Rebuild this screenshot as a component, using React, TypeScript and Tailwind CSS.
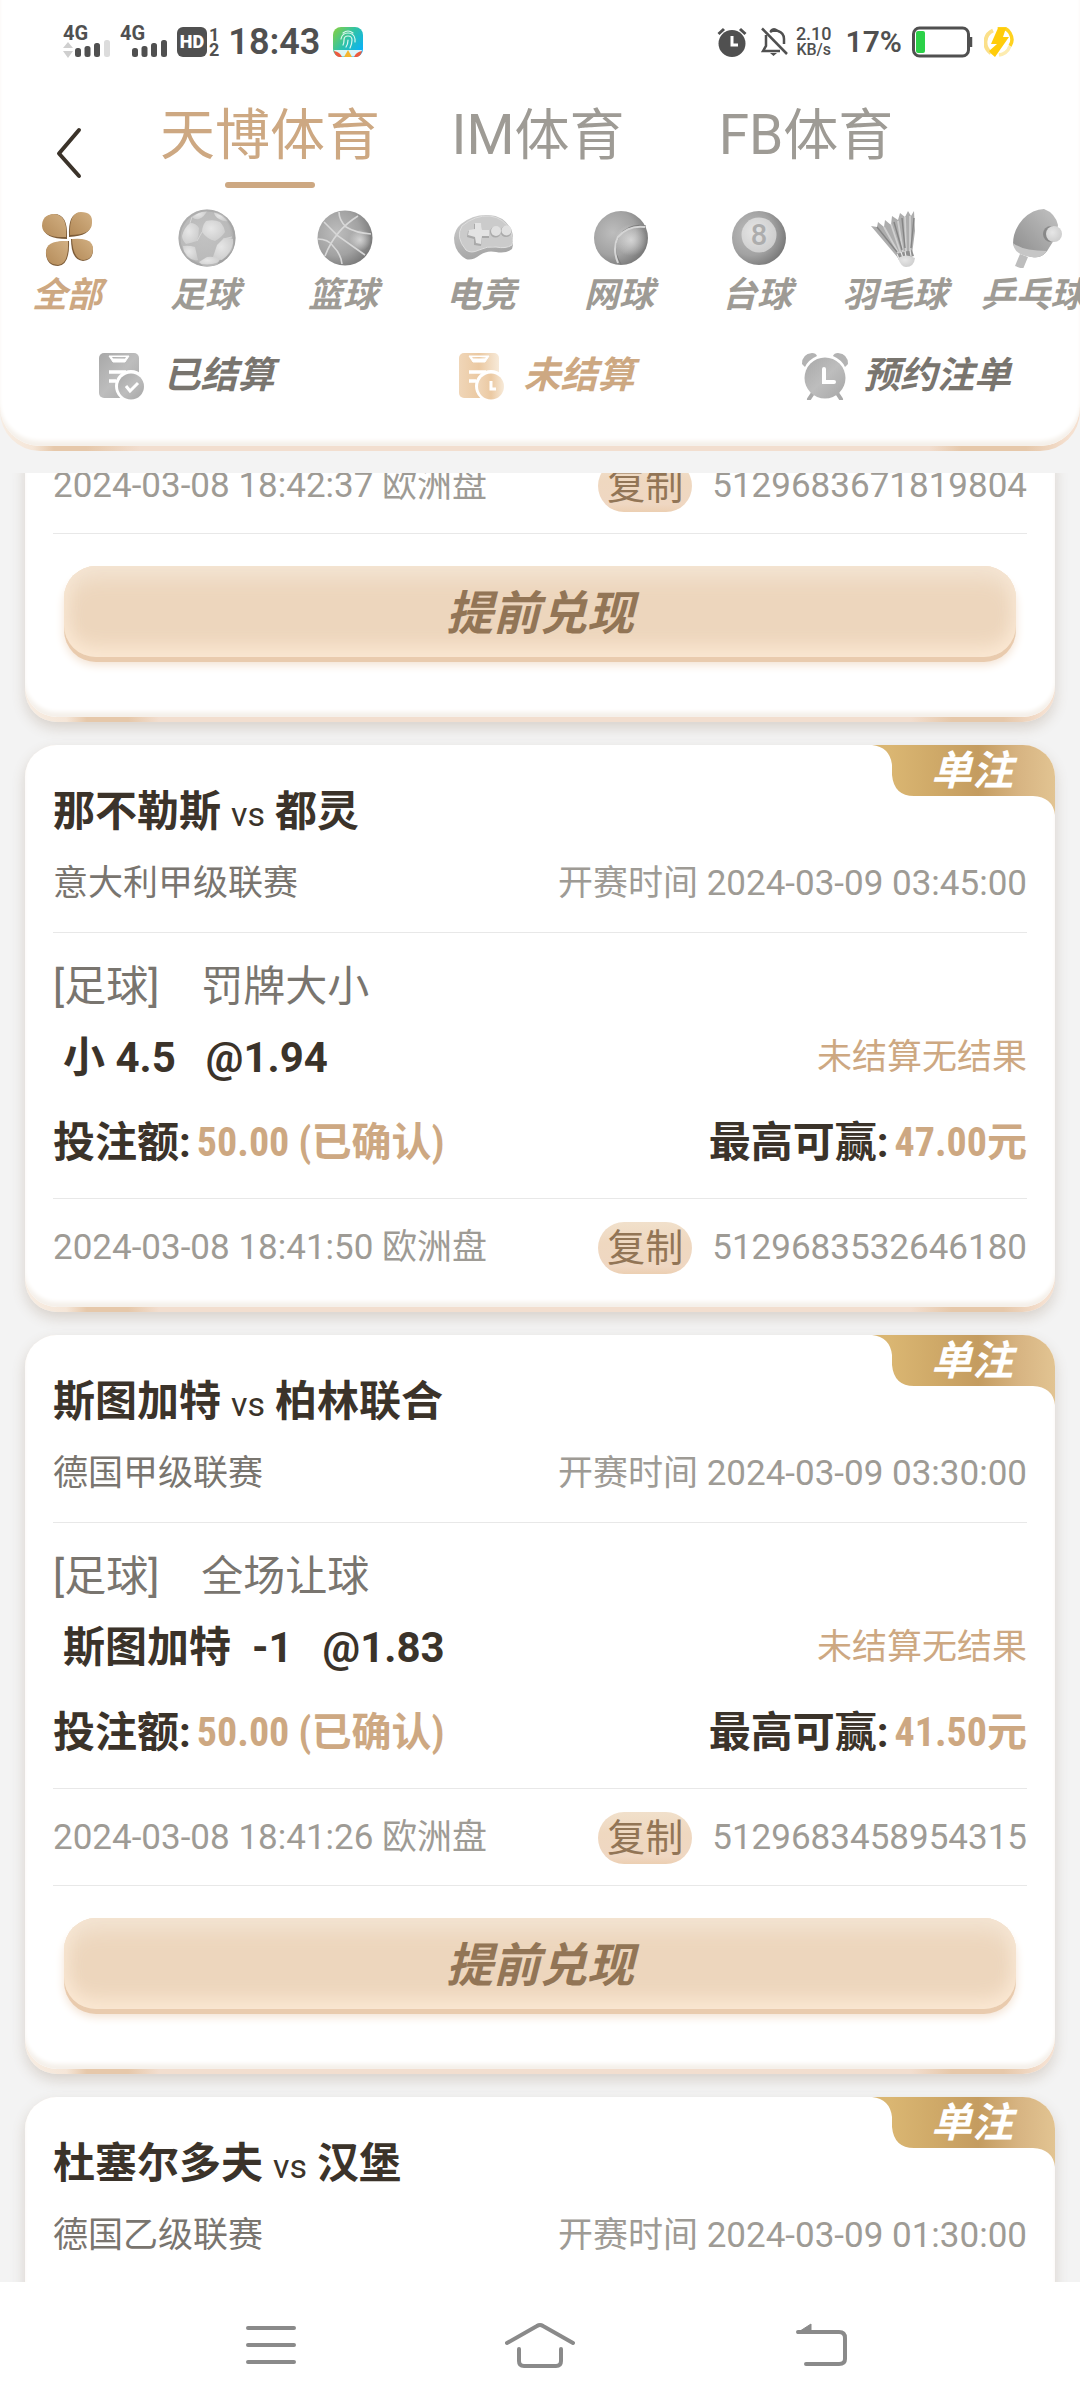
import React from "react";

type Bet = {
  id: string;
  home: string;
  away: string;
  league: string;
  start: string;
  market: string;
  pick: string;
  odds: string;
  win: string;
  placed: string;
  order: string;
  cashOut: boolean;
};

const bets: Bet[] = [
  {
    id: "b1",
    home: "那不勒斯",
    away: "都灵",
    league: "意大利甲级联赛",
    start: "2024-03-09 03:45:00",
    market: "罚牌大小",
    pick: "小 4.5",
    odds: "@1.94",
    win: "47.00",
    placed: "2024-03-08 18:41:50",
    order: "5129683532646180",
    cashOut: false,
  },
  {
    id: "b2",
    home: "斯图加特",
    away: "柏林联合",
    league: "德国甲级联赛",
    start: "2024-03-09 03:30:00",
    market: "全场让球",
    pick: "斯图加特  -1",
    odds: "@1.83",
    win: "41.50",
    placed: "2024-03-08 18:41:26",
    order: "5129683458954315",
    cashOut: true,
  },
];

/* Shared gradients used by the icons below */
function Gradients() {
  return (
    <svg className="absolute h-0 w-0" aria-hidden="true">
      <defs>
        <linearGradient id="petal" x1="1" y1="0" x2="0" y2="1">
          <stop offset="0" stopColor="#d2b083" />
          <stop offset="1" stopColor="#b48b59" />
        </linearGradient>
        <radialGradient id="lightBall" cx="0.45" cy="0.45" r="0.6">
          <stop offset="0" stopColor="#c2c2c2" />
          <stop offset="0.75" stopColor="#bababa" />
          <stop offset="1" stopColor="#9a9a9a" />
        </radialGradient>
        <radialGradient id="patch" cx="0.4" cy="0.4" r="0.7">
          <stop offset="0" stopColor="#e6e6e6" />
          <stop offset="1" stopColor="#cbcbcb" />
        </radialGradient>
        <radialGradient id="darkBall" cx="0.35" cy="0.4" r="0.7">
          <stop offset="0" stopColor="#bdbdbd" />
          <stop offset="0.6" stopColor="#a2a2a2" />
          <stop offset="1" stopColor="#757575" />
        </radialGradient>
        <radialGradient id="shine" cx="0.5" cy="0.5" r="0.5">
          <stop offset="0" stopColor="#e0e0e0" stopOpacity="0.8" />
          <stop offset="1" stopColor="#e0e0e0" stopOpacity="0" />
        </radialGradient>
        <linearGradient id="pad" x1="0" y1="0" x2="0.3" y2="1">
          <stop offset="0" stopColor="#cfcfcf" />
          <stop offset="1" stopColor="#a6a6a6" />
        </linearGradient>
        <linearGradient id="paddle" x1="1" y1="0" x2="0" y2="1">
          <stop offset="0" stopColor="#c2c2c2" />
          <stop offset="1" stopColor="#8c8c8c" />
        </linearGradient>
        <linearGradient id="grayFill" x1="0" y1="0" x2="1" y2="1">
          <stop offset="0" stopColor="#a8a8a8" />
          <stop offset="0.5" stopColor="#bdbdbd" />
          <stop offset="1" stopColor="#a6a6a6" />
        </linearGradient>
        <linearGradient id="goldFill" x1="0" y1="0" x2="1" y2="0">
          <stop offset="0" stopColor="#f0d6b8" />
          <stop offset="0.5" stopColor="#ebc9a2" />
          <stop offset="1" stopColor="#f7ead9" />
        </linearGradient>
        <linearGradient id="ribbon" x1="0" y1="0" x2="1" y2="0">
          <stop offset="0.1" stopColor="#dab672" />
          <stop offset="0.35" stopColor="#cfa968" />
          <stop offset="0.58" stopColor="#c49c60" />
          <stop offset="0.8" stopColor="#d7b482" />
          <stop offset="1" stopColor="#e2c492" />
        </linearGradient>
        <linearGradient id="appTile" x1="0" y1="0" x2="1" y2="0.8">
          <stop offset="0" stopColor="#8bd13c" />
          <stop offset="0.5" stopColor="#2ec2a8" />
          <stop offset="1" stopColor="#06b0ff" />
        </linearGradient>
      </defs>
    </svg>
  );
}

function Signal({ weak }: { weak?: boolean }) {
  return (
    <div className="relative w-[48px]">
      <svg width="48" height="34" viewBox="0 0 48 34" aria-hidden="true">
        {weak && <path d="M0 23 5 17l5 6zM0 26h10l-5 7z" fill="#cfcfcf" />}
        <g fill="#505050">
          <rect x="12" y="23" width="6" height="9" rx="2.5" />
          <rect x="21.5" y="21" width="6" height="11" rx="2.5" />
          <rect x="31" y="18" width="6" height="14" rx="2.5" />
        </g>
        <rect x="41" y="15" width="6" height="17" rx="2.5" fill={weak ? "#dcdcdc" : "#505050"} />
      </svg>
      <span className="absolute -top-1 left-0 text-[20px] leading-[24px] font-bold">4G</span>
    </div>
  );
}

function StatusBar() {
  return (
    <div className="flex h-[84px] items-center pr-[66px] pl-[63px] font-medium text-[#505050]">
      <div className="flex items-center gap-[9px]">
        <Signal weak />
        <Signal />
        <div className="flex items-center gap-0.5">
          <span className="flex h-[30px] w-[30px] items-center justify-center rounded-md bg-[#505050] text-[18px] leading-[30px] font-black text-white">
            HD
          </span>
          <span className="flex flex-col text-[18px] leading-[15px] font-bold">
            <span>1</span>
            <span>2</span>
          </span>
        </div>
        <span className="text-[36px] leading-[40px] font-semibold">18:43</span>
        <svg className="ml-1" width="30" height="30" viewBox="0 0 30 30" aria-hidden="true">
          <rect width="30" height="30" rx="8" fill="url(#appTile)" />
          <g fill="none" stroke="#d9f7ee" strokeWidth="1.2" strokeLinecap="round">
            <path d="M10 6q5-4 10 0M8 12q1-6 7-6t7 6v3M10 18q1-2 1-5 0-4 4-4t4 4q0 4-2 8M15 13q0 4-2 7" />
          </g>
          <path d="M1 23h28q-1 4-4 6.500H5Q2 27 1 23z" fill="#fff" fillOpacity="0.85" />
          <path d="M1 24q6 1 8 6H6q-4-1-5-6zM29 24q-6 1-8 6h3q4-1 5-6z" fill="#ee5a3f" />
          <path d="M15 23l4 7h-8z" fill="#f5b52e" />
        </svg>
      </div>
      <div className="ml-auto flex items-center">
        <svg width="30" height="30" viewBox="0 0 30 30" aria-hidden="true">
          <circle cx="15" cy="16.5" r="13.5" fill="#505050" />
          <path d="M1.5 7 7 2M28.5 7 23 2" stroke="#505050" strokeWidth="3" />
          <path d="M15 9v9h6" stroke="#fff" strokeWidth="3" fill="none" />
        </svg>
        <svg className="ml-3.5" width="28" height="30" viewBox="0 0 28 30" aria-hidden="true">
          <g fill="none" stroke="#505050" strokeWidth="2.5">
            <path d="M5 8v11l-3 5h17M9 5q4-3 8-1 6 2 6 8v5" />
            <path d="M1 1.5 26 27" />
          </g>
          <path d="M9 3q4-4 8 0v2H9zM9 26h7l-3.5 3z" fill="#505050" />
        </svg>
        <div className="ml-[7px] flex flex-col items-center text-[18px] leading-[16px]">
          <span>2.10</span>
          <span className="text-base leading-[16px]">KB/s</span>
        </div>
        <span className="ml-3.5 text-[30px] leading-[36px] font-semibold">17%</span>
        <svg className="ml-2.5" width="62" height="32" viewBox="0 0 62 32" aria-hidden="true">
          <rect x="1.5" y="2" width="55" height="28" rx="6" fill="none" stroke="#505050" strokeWidth="3" />
          <rect x="4" y="5" width="9" height="22" rx="2" fill="#2bd148" />
          <path d="M59 11v10" stroke="#505050" strokeWidth="2.5" />
        </svg>
        <svg className="ml-2.5" width="30" height="30" viewBox="0 0 30 30" aria-hidden="true">
          <path d="M7 26A13 13 0 0 1 9 3.5" fill="none" stroke="#fbe08a" strokeWidth="4" />
          <path d="M14 2q8-3 12 4 4 7 0 13" fill="none" stroke="#ffd21f" strokeWidth="3.5" />
          <path d="M26 19q-3 8-11 9" fill="none" stroke="#fdecb0" strokeWidth="3.5" />
          <path d="M14 1h8l-3 9h6L11 30q-4-3-6-6l8-7H7z" fill="#ffcc0a" />
        </svg>
      </div>
    </div>
  );
}

const tabs = ["天博体育", "IM体育", "FB体育"];

function Tabs() {
  return (
    <nav className="flex items-start">
      <button type="button" aria-label="返回" className="flex w-[136px] shrink-0 pt-[43px] pl-[54px]">
        <svg width="28" height="52" viewBox="0 0 28 52">
          <path d="M25 3 5 26.5 25 49" fill="none" stroke="#3b332a" strokeWidth="4" strokeLinecap="round" strokeLinejoin="round" />
        </svg>
      </button>
      {tabs.map((tab, i) => (
        <button
          key={tab}
          type="button"
          className={
            i === 0
              ? "flex w-[268px] flex-col items-center gap-[15px] pt-[19px] text-[55px] leading-[64px] text-[#cda882]"
              : "flex w-[268px] flex-col items-center gap-[15px] pt-[19px] text-[55px] leading-[64px] text-[#9e9b95]"
          }
        >
          {tab}
          {i === 0 && <span className="h-1.5 w-[90px] rounded-full bg-[#cda882]" />}
        </button>
      ))}
    </nav>
  );
}

const sports: { name: string; icon: React.ReactNode }[] = [
  {
    name: "全部",
    icon: (
      <>
        <g fill="#7d5c38">
          <path d="M28 29Q29 6 15 6 4 7 4 19q1 12 24 12z" />
          <path d="M30 28Q29 5 41 5t11 11q0 12-22 13z" />
          <path d="M30 33Q6 33 7 46q1 12 12 12 12-1 11-25z" />
          <path d="M32 31q0 21 12 22 10-1 10-11 0-12-22-11z" />
        </g>
        <g fill="url(#petal)">
          <path d="M27 29Q29 6 14 6 3 7 3 18q1 12 24 11z" />
          <path d="M31 27Q30 4 42 4t11 11q0 12-22 12z" />
          <path d="M29 33Q6 32 7 45q1 12 12 12 11-1 10-24z" />
          <path d="M33 31q1 21 12 21 9-1 9-11 0-12-21-10z" />
        </g>
      </>
    ),
  },
  {
    name: "足球",
    icon: (
      <>
        <circle cx="30" cy="30" r="28.5" fill="url(#lightBall)" />
        <g fill="url(#patch)">
          <path d="M13 15q6 0 9 5 0 7-2 13-6 2-11 3-4-4-4-8 2-8 8-13z" />
          <path d="M29 13q8-2 14 1 4 4 5 10-4 6-10 9-8-2-13-9 0-6 4-11z" />
          <path d="M6 38q6-1 12 1l3 13q-6 1-11-3-4-5-4-11z" />
          <path d="M40 37l6-6q5-2 10 0 1 6-1 11-4 6-10 10-6 0-9-3z" />
          <path d="M22 54l8-5q7-1 13 2l-3 6q-8 2-14 1z" />
          <path d="M15 9q8-6 15-6-2 5-8 8-4 1-7-2z" />
          <path d="M37 4q10 2 14 9-4 1-9-2-5-3-5-7z" />
        </g>
        <path d="M55 29l-9 2M20 33l5-9M13 15l2-6" stroke="#d6d6d6" strokeWidth="1" />
        <circle cx="30" cy="30" r="27.5" fill="none" stroke="#a0a0a0" strokeOpacity="0.5" strokeWidth="2" />
      </>
    ),
  },
  {
    name: "篮球",
    icon: (
      <>
        <circle cx="30" cy="30" r="27.5" fill="url(#darkBall)" />
        <circle cx="45" cy="32" r="11" fill="url(#shine)" />
        <g fill="none" stroke="#d8d8d8" strokeWidth="1.6">
          <path d="M24 4q0 8 7 15 10 6 25 7" />
          <path d="M43 8Q20 22 10 48" />
          <path d="M9 14l14 14 27 19" />
          <path d="M3 31q10 0 15 7 8 8 9 18" />
        </g>
      </>
    ),
  },
  {
    name: "电竞",
    icon: (
      <>
        <path d="M8 16Q20 6 36 7q15 1 22 14 4 10 1 20-6 5-16 3-9-2-16 3-8 6-14 4Q1 44 1 30q1-9 7-14z" fill="url(#pad)" />
        <path d="M9 18Q22 7 37 8q14 2 20 14 4 9 2 15-6 4-16 2-9-1-17 3-8 4-13 0Q2 29 9 18z" fill="#cbcbcb" stroke="#dedede" strokeWidth="1" />
        <path d="M21 16h7l1 7 7 0v7l-7 0-1 8-7-1 0-6-7-2 1-6 6-1z" fill="#a9a9a9" />
        <path d="M22 15h6l1 7 7 0v6l-7 0-1 8-5-1-1-6-7-2 1-5 6-1z" fill="#e3e3e3" />
        <circle cx="42.5" cy="24" r="5.5" fill="#aaa" />
        <circle cx="53" cy="23.5" r="5.5" fill="#aaa" />
        <circle cx="43" cy="23" r="5" fill="#e0e0e0" />
        <circle cx="53.5" cy="22.5" r="5" fill="#e0e0e0" />
      </>
    ),
  },
  {
    name: "网球",
    icon: (
      <>
        <circle cx="30" cy="30" r="27" fill="url(#darkBall)" />
        <circle cx="40" cy="32" r="16" fill="url(#shine)" />
        <path d="M55 18Q38 15 28 28q-8 13 2 28" fill="none" stroke="#7c7c7c" strokeWidth="1.2" />
        <path d="M54 19Q37 17 27 29q-6 11 0 26" fill="none" stroke="#d5d5d5" strokeWidth="2" />
      </>
    ),
  },
  {
    name: "台球",
    icon: (
      <>
        <circle cx="30" cy="30" r="27" fill="url(#darkBall)" />
        <circle cx="30" cy="27" r="17.5" fill="url(#patch)" />
        <text x="30" y="37" textAnchor="middle" fontFamily="Roboto" fontSize="29" fontStyle="normal" fontWeight="500" fill="#adadad">
          8
        </text>
      </>
    ),
  },
  {
    name: "羽毛球",
    icon: (
      <>
        <path d="M4 18l6 1 1-5 6 5 1-7 6 5 1-9 6 4 2-7 5 4 3-6 3 5 3-5 1 20-3 23-13 5z" fill="#adadad" />
        <path d="M17 19l15 27M24 16l10 30M31 13l5 31M38 9l1 34M43 8l0 36" stroke="#cfcfcf" strokeWidth="1.8" />
        <path d="M10 19l20 25M27 14l8 28M35 10l3 30M47 10l-3 30" stroke="#858585" strokeWidth="1.4" />
        <path d="M29 46l16-4 2 6-15 4z" fill="#8f8f8f" />
        <path d="M30 46l2 5M34 44l2 6M38 43l1 6M43 42l1 6" stroke="#e9e9e9" strokeWidth="1.2" />
        <path d="M31 50q8-5 17 0-1 9-9 9-5 0-8-9z" fill="url(#patch)" />
      </>
    ),
  },
  {
    name: "乒乓球",
    icon: (
      <>
        <path d="M15 46l8 3-5 12-8-3z" fill="#bdbdbd" />
        <path d="M8 36Q8 22 18 11 28 1 39 1q11 4 14 16-1 12-9 23-6 11-17 9-15-2-19-13z" fill="url(#paddle)" />
        <path d="M8 35q10 8 34 8-6 8-16 6-17-2-18-14z" fill="#c6c6c6" />
        <circle cx="46" cy="26" r="8" fill="#6f6f6f" fillOpacity="0.6" />
        <circle cx="49" cy="26" r="8" fill="url(#patch)" />
      </>
    ),
  },
];

function Sports() {
  return (
    <div className="mt-5 flex overflow-hidden">
      {sports.map((s, i) => (
        <button
          key={s.name}
          type="button"
          className={
            i === 0
              ? "flex w-[138px] shrink-0 flex-col items-center gap-2 text-[35px] leading-[40px] font-bold text-[#cda882] italic"
              : "flex w-[138px] shrink-0 flex-col items-center gap-2 text-[35px] leading-[40px] font-bold text-[#9e9b95] italic"
          }
        >
          <svg width="60" height="60" viewBox="0 0 60 60" aria-hidden="true">
            {s.icon}
          </svg>
          <span className="pr-1 whitespace-nowrap">{s.name}</span>
        </button>
      ))}
    </div>
  );
}

function SlipIcon({ fill, children }: { fill: string; children: React.ReactNode }) {
  return (
    <svg width="48" height="48" viewBox="0 0 48 48" aria-hidden="true">
      <rect x="1" y="1" width="40" height="45" rx="5" fill={fill} />
      <path d="M11 4h20l-4 6H15z" fill="#fff" stroke="#fff" strokeWidth="1" />
      <path d="M14 5h14l-1 1.500H15z" fill={fill} />
      <path d="M11 20h17M11 29h7" stroke="#fff" strokeWidth="3.5" />
      <circle cx="33" cy="34" r="16" fill="#fff" />
      <circle cx="33" cy="34.5" r="13" fill={fill} />
      {children}
    </svg>
  );
}

function Filters() {
  return (
    <div className="mt-9 grid grid-cols-3 text-[37px] leading-[48px] font-bold text-[#79756f] italic">
      <button type="button" className="flex items-center justify-center gap-[18px] pl-3">
        <SlipIcon fill="url(#grayFill)">
          <path d="M28 34l4 5 8-8" fill="none" stroke="#fff" strokeWidth="3" />
        </SlipIcon>
        已结算
      </button>
      <button type="button" className="flex items-center justify-center gap-[18px] pl-3 text-[#cda882]">
        <SlipIcon fill="url(#goldFill)">
          <path d="M33 29v8h5" fill="none" stroke="#fff" strokeWidth="3" />
        </SlipIcon>
        未结算
      </button>
      <button type="button" className="flex items-center justify-center gap-[14px] pl-3">
        <svg width="48" height="48" viewBox="0 0 48 48" aria-hidden="true">
          <path d="M1 12Q1 2 11 1q4 0 5 3Q7 8 4 15zM47 12Q47 2 37 1q-4 0-5 3 9 4 12 11z" fill="#b3b3b3" />
          <path d="M12 41l-4 6M36 41l4 6" stroke="#aaa" strokeWidth="4" strokeLinecap="round" />
          <circle cx="24" cy="26" r="20.5" fill="url(#grayFill)" />
          <path d="M23 17v13h10" fill="none" stroke="#fff" strokeWidth="4" strokeLinecap="round" />
        </svg>
        预约注单
      </button>
    </div>
  );
}

function Panel({ children }: { children: React.ReactNode }) {
  return (
    <article className="rounded-[32px] bg-[linear-gradient(90deg,#f7ede3_0%,#f5e6d8_4%,#e6c8aa_6%,#e6c8aa_10%,#f2decf_13%,#f2decf_86%,#e6c8aa_90%,#e6c8aa_95%,#f5e0d0_99%)] pb-[5px] shadow-[0_6px_14px_rgba(110,80,50,0.2)]">
      <div className="relative overflow-hidden rounded-[32px] bg-white px-7 shadow-[inset_0_-6px_4px_-1px_#f5f0ea]">
        {children}
      </div>
    </article>
  );
}

function Ribbon() {
  return (
    <div className="absolute top-0 right-0">
      <svg width="183" height="70" viewBox="0 0 183 70" aria-hidden="true">
        <path d="M0 0H183V70Q181 52 161 51H42Q22 51 20 30V20Q18 2 0 0z" fill="url(#ribbon)" />
      </svg>
      <span className="absolute top-0.5 right-[42px] text-[41px] leading-[48px] font-bold whitespace-nowrap text-white italic">
        单注
      </span>
    </div>
  );
}

function Heading({ home, away, league, start }: { home: string; away: string; league: string; start: string }) {
  return (
    <>
      <Ribbon />
      <h2 className="flex items-baseline gap-2.5 pt-[37px] text-[42px] leading-[60px] font-bold text-[#3b332a]">
        {home}
        <span className="text-[34px] leading-[40px] font-normal">vs</span>
        {away}
      </h2>
      <div className="mt-[18px] mb-6 flex justify-between text-[35px] leading-[48px]">
        <span className="text-[#79756f]">{league}</span>
        <span className="text-[#9e9b95]">开赛时间 {start}</span>
      </div>
    </>
  );
}

function PlacedRow({ placed, order }: { placed: string; order: string }) {
  return (
    <div className="flex h-24 items-center pt-0.5 text-[35px] leading-[48px] text-[#9e9b95]">
      <span>{placed} 欧洲盘</span>
      <button
        type="button"
        className="mr-5 ml-auto h-[52px] rounded-[26px] bg-[linear-gradient(180deg,#f1e0cb_0%,#efd8c0_40%,#efd7c2_85%,#eccfb2_100%)] px-[9px] text-[38px] leading-[52px] text-[#927556]"
      >
        复制
      </button>
      <span>{order}</span>
    </div>
  );
}

function CashOut() {
  return (
    <div className="border-t border-[#e8e8e8] px-[11px] pt-8 pb-[60px]">
      <button
        type="button"
        className="block w-full rounded-[32px] bg-[#edd6bd] pt-[5px] text-[47px] leading-[86px] font-bold text-[#927556] italic shadow-[inset_0_-10px_18px_#fbe8d3,inset_0_12px_20px_#f3e4d3,0_5px_0_#e9cbae,0_8px_10px_#f3e2d2]"
      >
        提前兑现
      </button>
    </div>
  );
}

function Amount({ label, value }: { label: string; value: string }) {
  return (
    <div className="flex gap-1.5">
      {label}
      <span className="font-['Liberation_Sans_Narrow','Roboto_Condensed','Noto_Sans_CJK_SC',sans-serif] text-[40px] text-[#cda882]">
        {value}
      </span>
    </div>
  );
}

function BetCard({ bet }: { bet: Bet }) {
  return (
    <Panel>
      <Heading home={bet.home} away={bet.away} league={bet.league} start={bet.start} />
      <div className="border-t border-[#e8e8e8] pt-6 text-[42px] leading-[60px] text-[#79756f]">
        [足球]　{bet.market}
      </div>
      <div className="mt-[11px] flex items-center justify-between pl-2.5">
        <div className="flex gap-[30px] text-[42px] leading-[60px] font-bold whitespace-pre text-[#3b332a]">
          <span>{bet.pick}</span>
          <span>{bet.odds}</span>
        </div>
        <span className="text-[35px] leading-[48px] text-[#cda882]">未结算无结果</span>
      </div>
      <div className="my-[25px] flex justify-between text-[42px] leading-[60px] font-bold text-[#3b332a]">
        <Amount label="投注额:" value="50.00 (已确认)" />
        <Amount label="最高可赢:" value={`${bet.win}元`} />
      </div>
      <div className="border-t border-[#e8e8e8]" />
      <PlacedRow placed={bet.placed} order={bet.order} />
      {bet.cashOut ? <CashOut /> : <div className="h-3" />}
    </Panel>
  );
}

function SystemNav() {
  return (
    <footer className="grid h-[126px] shrink-0 grid-cols-3 bg-white pr-[120px] pl-[133px]">
      <button type="button" aria-label="菜单" className="flex items-center justify-center">
        <svg width="50" height="44" viewBox="0 0 50 44">
          <path d="M2 5h46M2 22h46M2 39h46" stroke="#8a8a8a" strokeWidth="4" strokeLinecap="round" />
        </svg>
      </button>
      <button type="button" aria-label="主页" className="flex items-center justify-center">
        <svg width="82" height="46" viewBox="0 0 82 46">
          <g fill="none" stroke="#8a8a8a" strokeWidth="4" strokeLinecap="round" strokeLinejoin="round">
            <path d="M2 21 32 4q3-2 6 0l30 17" />
            <path d="M14 27v12q0 5 5 5h32q5 0 5-5V27" />
          </g>
        </svg>
      </button>
      <button type="button" aria-label="后退" className="flex items-center justify-center">
        <svg width="52" height="46" viewBox="0 0 52 46">
          <path d="M1 11 15 2v7z" fill="#8a8a8a" stroke="#8a8a8a" strokeWidth="1" />
          <path d="M2 10h41q6 0 6 6v21q0 5-6 5H10" fill="none" stroke="#8a8a8a" strokeWidth="4" strokeLinecap="round" />
        </svg>
      </button>
    </footer>
  );
}

export default function App() {
  return (
    <div className="flex h-screen flex-col overflow-hidden bg-[#f3f3f3] font-['Roboto','Noto_Sans_CJK_SC',sans-serif]">
      <Gradients />
      <header className="shrink-0 rounded-b-[40px] bg-[linear-gradient(90deg,#f7ede3_0%,#f5e6d8_3%,#e6c8aa_5%,#e6c8aa_8%,#f2decf_13%,#f2decf_86%,#e6c8aa_89%,#e6c8aa_95%,#f5e0d0_99%)] pb-[5px]">
        <div className="rounded-b-[40px] bg-white pb-[46px] shadow-[inset_0_-6px_4px_-1px_#f5f0ea]">
          <StatusBar />
          <Tabs />
          <Sports />
          <Filters />
        </div>
      </header>
      <main className="mt-[22px] min-h-0 flex-1 overflow-hidden px-[25px]">
        <div className="-mt-9 flex flex-col gap-[23px]">
          <Panel>
            <PlacedRow placed="2024-03-08 18:42:37" order="5129683671819804" />
            <CashOut />
          </Panel>
          {bets.map((bet) => (
            <BetCard key={bet.id} bet={bet} />
          ))}
          <Panel>
            <Heading home="杜塞尔多夫" away="汉堡" league="德国乙级联赛" start="2024-03-09 01:30:00" />
            <div className="h-24 border-t border-[#e8e8e8]" />
          </Panel>
        </div>
      </main>
      <SystemNav />
    </div>
  );
}
